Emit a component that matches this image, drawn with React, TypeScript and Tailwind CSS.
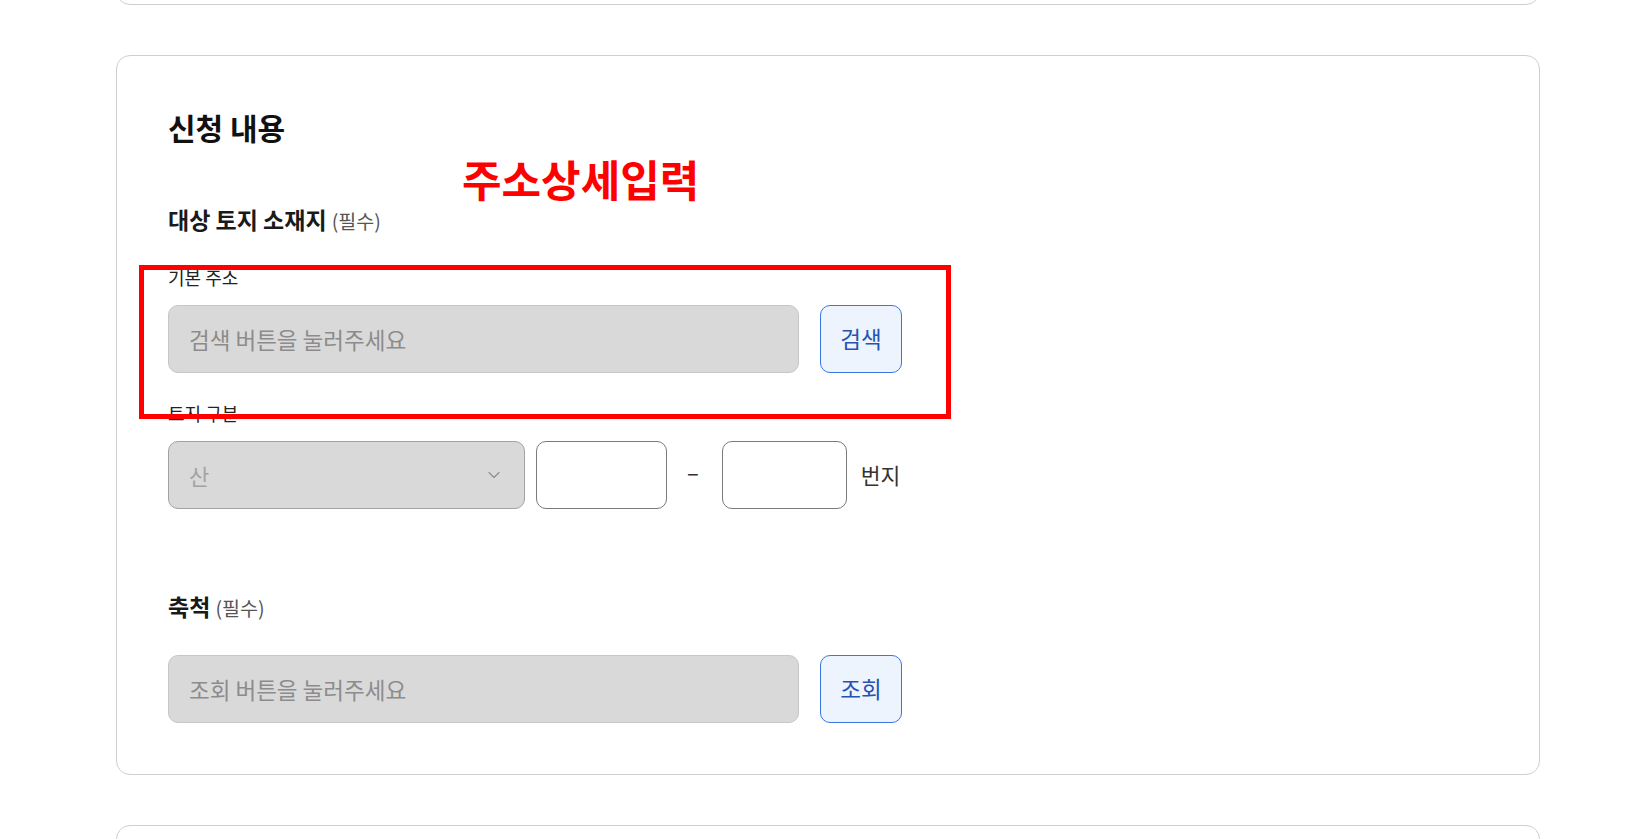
import { ChevronDown } from "lucide-react";

const FONT = "font-['Noto_Sans_CJK_KR','Noto_Sans',sans-serif]";

function Label({ children }: { children: React.ReactNode }) {
  return <div className="text-[18px] leading-[24px] text-[#222]">{children}</div>;
}

function SearchRow({ placeholder, action }: { placeholder: string; action: string }) {
  return (
    <div className="flex items-center gap-[21px]">
      <input
        readOnly
        placeholder={placeholder}
        className="h-[68px] w-[631px] rounded-[10px] border border-[#c6c6c6] bg-[#d9d9d9] px-[20px] text-[22.5px] text-[#333] outline-none placeholder:text-[#8c8c8c]"
      />
      <button
        type="button"
        className="h-[68px] w-[82px] rounded-[10px] border border-[#3a76e0] bg-[#eef4fe] text-[22.5px] text-[#2453b3]"
      >
        {action}
      </button>
    </div>
  );
}

export default function App() {
  return (
    <div className={`min-h-screen overflow-hidden bg-white ${FONT}`}>
      <div className="ml-[116px] flex w-[1424px] flex-col gap-[50px]">
        {/* previous card, cut off by the viewport */}
        <div className="-mt-[115px] h-[120px] rounded-[14px] border border-[#cfcfcf]" />

        <section className="relative h-[720px] rounded-[14px] border border-[#cfcfcf] pl-[51px] pt-[51px]">
          <h2 className="text-[30px] font-bold leading-[40px] text-[#111]">신청 내용</h2>

          <div className="absolute left-[345px] top-[98px] text-[43px] font-bold leading-[48px] text-[#ff0000]">
            주소상세입력
          </div>

          <div className="mt-[57px] text-[23px] leading-[30px] text-[#1a1a1a]">
            <span className="font-bold">대상 토지 소재지</span>{" "}
            <span className="text-[19.5px] text-[#555]">(필수)</span>
          </div>

          <div className="mt-[29px]">
            <Label>기본 주소</Label>
          </div>
          <div className="mt-[16px]">
            <SearchRow placeholder="검색 버튼을 눌러주세요" action="검색" />
          </div>

          <div className="mt-[28px]">
            <Label>토지 구분</Label>
          </div>
          <div className="mt-[16px] flex items-center">
            <div className="flex h-[68px] w-[357px] items-center justify-between rounded-[10px] border border-[#a2a2a2] bg-[#d9d9d9] pl-[20px] pr-[20px]">
              <span className="text-[22px] text-[#a3a3a3]">산</span>
              <ChevronDown className="h-[20px] w-[20px] text-[#8f8f8f]" strokeWidth={1.4} />
            </div>
            <input className="ml-[11px] h-[68px] w-[131px] rounded-[10px] border border-[#7a7a7a] bg-white outline-none" />
            <span className="mb-[8px] ml-[20px] mr-[23px] text-[22px] text-[#333]">–</span>
            <input className="h-[68px] w-[125px] rounded-[10px] border border-[#7a7a7a] bg-white outline-none" />
            <span className="ml-[14px] text-[21.5px] text-[#333]">번지</span>
          </div>

          <div className="mt-[82px] text-[23px] leading-[30px] text-[#1a1a1a]">
            <span className="font-bold">축척</span>{" "}
            <span className="text-[19.5px] text-[#555]">(필수)</span>
          </div>
          <div className="mt-[32px]">
            <SearchRow placeholder="조회 버튼을 눌러주세요" action="조회" />
          </div>

          {/* red annotation box */}
          <div className="pointer-events-none absolute left-[22px] top-[209px] h-[154px] w-[812px] border-[5px] border-[#ff0000]" />
        </section>

        <div className="h-[200px] rounded-[14px] border border-[#cfcfcf]" />
      </div>
    </div>
  );
}
